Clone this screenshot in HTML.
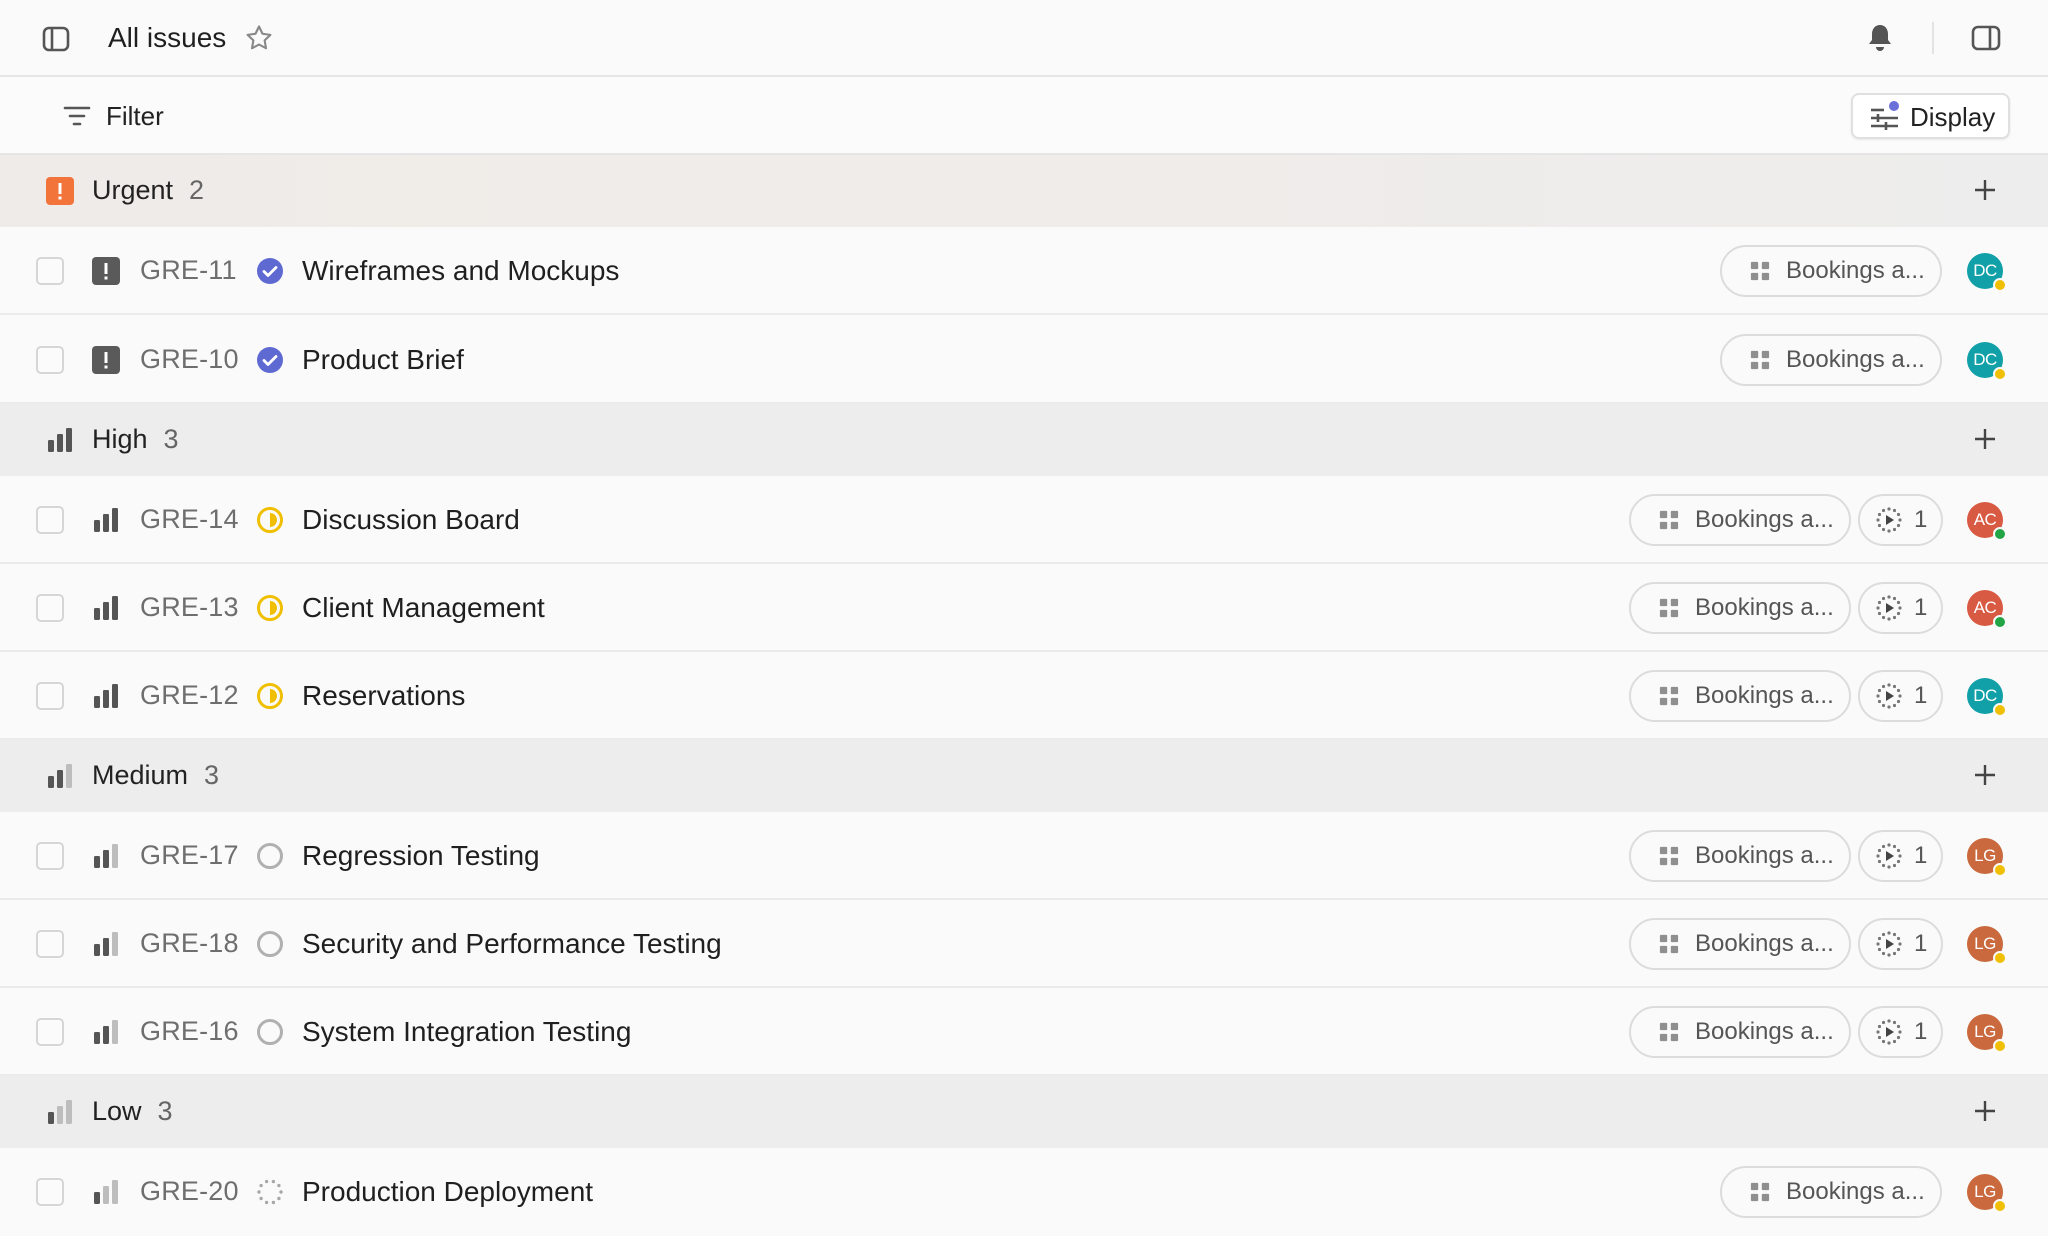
<!DOCTYPE html>
<html><head><meta charset="utf-8"><style>
*{box-sizing:border-box;margin:0;padding:0}
body{width:2048px;height:1236px;overflow:hidden;background:#fafafa;font-family:"Liberation Sans",sans-serif;color:#1f1f1f;position:relative}
.abs{position:absolute}
.top{left:0;top:0;width:2048px;height:77px;border-bottom:2px solid #e6e6e6;background:#fafafa}
.fbar{left:0;top:77px;width:2048px;height:78px;border-bottom:2px solid #e6e6e6;background:#fbfbfb}
.hdr{position:absolute;left:0;width:2048px;height:72px;background:#ededed}
.hdr .lbl{position:absolute;left:92px;top:20px;font-size:27px;color:#222}
.hdr .cnt{color:#666;margin-left:16px}
.hdr .ic{position:absolute;left:46px;top:22px}
.hdr .plus{position:absolute;left:1972px;top:22px}
.row{position:absolute;left:0;width:2048px;height:88px;background:#fafafa;border-bottom:2px solid #ebebeb}
.cb{position:absolute;left:36px;top:30px;width:28px;height:28px;border:2px solid #d6d6d6;border-radius:5px;background:#fbfbfb}
.pi{position:absolute;left:92px;top:30px}
.id{position:absolute;left:140px;top:28px;font-size:27px;color:#6e6e6e;letter-spacing:0.2px}
.st{position:absolute;left:256px;top:30px}
.ti{position:absolute;left:302px;top:28px;font-size:28px;color:#1f1f1f}
.chip{position:absolute;top:18px;height:52px;border:2px solid #dcdcdc;border-radius:26px;background:#fafafa;font-size:24px;color:#555;display:flex;align-items:center}
.bk{width:222px;padding-left:28px}
.bk svg{margin-right:16px}
.cy{left:1858px;width:85px;padding-left:14px}
.cy span{margin-left:10px}
.av{position:absolute;left:1967px;top:26px;width:36px;height:36px;border-radius:50%;color:#fff;font-size:17px;text-align:center;line-height:36px;letter-spacing:-0.5px}
.av i{position:absolute;right:-4px;bottom:-3px;width:14px;height:14px;border-radius:50%;border:2px solid #fafafa}
</style></head><body>
<div class="abs top">
 <svg class="abs" style="left:42px;top:26px" width="28" height="26" viewBox="0 0 28 26"><rect x="2" y="2" width="24" height="22" rx="5" fill="none" stroke="#555" stroke-width="2.6"/><line x1="10" y1="3" x2="10" y2="23" stroke="#555" stroke-width="2.6"/></svg>
 <div class="abs" style="left:108px;top:22px;font-size:28px;color:#1f1f1f">All issues</div>
 <svg class="abs" style="left:244px;top:23px" width="30" height="30" viewBox="0 0 24 24"><path d="M12 2.8l2.8 5.8 6.3.9-4.6 4.4 1.1 6.3L12 17.2l-5.6 3 1.1-6.3-4.6-4.4 6.3-.9z" fill="none" stroke="#888" stroke-width="1.7" stroke-linejoin="round"/></svg>
 <svg class="abs" style="left:1866px;top:23px" width="28" height="30" viewBox="0 0 28 30"><path d="M14 2c-5 0-8 4-8 9v6l-3 4h22l-3-4v-6c0-5-3-9-8-9z" fill="#555"/><path d="M10 24a4 4 0 0 0 8 0z" fill="#555"/></svg>
 <div class="abs" style="left:1932px;top:22px;width:2px;height:32px;background:#e3e3e3"></div>
 <svg class="abs" style="left:1971px;top:25px" width="30" height="26" viewBox="0 0 30 26"><rect x="2" y="2" width="26" height="22" rx="5" fill="none" stroke="#555" stroke-width="2.6"/><line x1="19" y1="3" x2="19" y2="23" stroke="#555" stroke-width="2.6"/></svg>
</div>
<div class="abs fbar">
 <svg class="abs" style="left:63px;top:28px" width="28" height="22" viewBox="0 0 28 22"><g stroke="#555" stroke-width="2.6" stroke-linecap="round"><line x1="2" y1="3" x2="26" y2="3"/><line x1="7" y1="11" x2="21" y2="11"/><line x1="11" y1="19" x2="17" y2="19"/></g></svg>
 <div class="abs" style="left:106px;top:24px;font-size:26px;color:#222">Filter</div>
 <div class="abs" style="left:1851px;top:16px;width:159px;height:46px;border:2px solid #e0e0e0;border-radius:8px;background:#fff;box-shadow:0 1px 2px rgba(0,0,0,.08)">
  <svg class="abs" style="left:15px;top:6px" width="34" height="30" viewBox="0 0 34 30"><g stroke="#555" stroke-width="2.6"><line x1="3" y1="9" x2="16" y2="9"/><line x1="3" y1="17" x2="30" y2="17"/><line x1="3" y1="25" x2="30" y2="25"/><line x1="10" y1="13" x2="10" y2="21"/><line x1="18" y1="21" x2="18" y2="29"/></g><circle cx="26" cy="5" r="5" fill="#6b6fd8"/></svg>
  <div class="abs" style="left:57px;top:7px;font-size:26px;color:#222">Display</div>
 </div>
</div>

<div class="hdr" style="top:155px;background:linear-gradient(90deg,#efebe8,#f0ece9 40%,#ededed)">
 <svg class="ic" width="28" height="28" viewBox="0 0 28 28"><rect width="28" height="28" rx="4" fill="#f2743a"/><rect x="12.5" y="6" width="3" height="11" fill="#fff"/><rect x="12.5" y="19.5" width="3" height="3" fill="#fff"/></svg>
 <div class="lbl">Urgent<span class="cnt">2</span></div>
 <svg class="plus" width="26" height="26" viewBox="0 0 26 26"><path d="M13 3v20M3 13h20" stroke="#444" stroke-width="2.4"/></svg>
</div>

<div id="rows"></div>
<script>
const grid='<svg width="20" height="20" viewBox="0 0 22 22" fill="#8f8f8f"><rect x="1" y="1" width="8" height="8" rx="1"/><rect x="13" y="1" width="8" height="8" rx="1"/><rect x="1" y="13" width="8" height="8" rx="1"/><rect x="13" y="13" width="8" height="8" rx="1"/></svg>';
let dots='';for(let i=0;i<12;i++){const a=i*Math.PI/6;dots+=`<circle cx="${15+11*Math.cos(a)}" cy="${15+11*Math.sin(a)}" r="1.6"/>`}
const cyc='<svg width="30" height="30" viewBox="0 0 30 30" fill="#777">'+dots+'<path d="M12 10l8 5-8 5z" fill="#444"/></svg>';
const pri={
u:'<svg width="28" height="28" viewBox="0 0 28 28"><rect width="28" height="28" rx="4" fill="#5a5a5a"/><rect x="12.5" y="6" width="3" height="11" fill="#fff"/><rect x="12.5" y="19.5" width="3" height="3" fill="#fff"/></svg>',
h:'<svg width="28" height="28" viewBox="0 0 28 28"><rect x="2" y="14" width="6" height="12" rx="1.2" fill="#555"/><rect x="11" y="8" width="6" height="18" rx="1.2" fill="#555"/><rect x="20" y="2" width="6" height="24" rx="1.2" fill="#555"/></svg>',
m:'<svg width="28" height="28" viewBox="0 0 28 28"><rect x="2" y="14" width="6" height="12" rx="1.2" fill="#555"/><rect x="11" y="8" width="6" height="18" rx="1.2" fill="#555"/><rect x="20" y="2" width="6" height="24" rx="1.2" fill="#bdbdbd"/></svg>',
l:'<svg width="28" height="28" viewBox="0 0 28 28"><rect x="2" y="14" width="6" height="12" rx="1.2" fill="#555"/><rect x="11" y="8" width="6" height="18" rx="1.2" fill="#bdbdbd"/><rect x="20" y="2" width="6" height="24" rx="1.2" fill="#bdbdbd"/></svg>'};
let sd='';for(let i=0;i<10;i++){const a=i*Math.PI/5;sd+=`<circle cx="${14+11*Math.cos(a)}" cy="${14+11*Math.sin(a)}" r="1.7"/>`}
const st={
d:'<svg width="28" height="28" viewBox="0 0 28 28"><circle cx="14" cy="14" r="13" fill="#5e6ad2"/><path d="M8 14.5l4 4 8-8" fill="none" stroke="#fff" stroke-width="2.8" stroke-linecap="round" stroke-linejoin="round"/></svg>',
p:'<svg width="28" height="28" viewBox="0 0 28 28"><circle cx="14" cy="14" r="11.5" fill="none" stroke="#f0bf00" stroke-width="3"/><path d="M14 7a7 7 0 0 1 0 14z" fill="#f0bf00"/></svg>',
t:'<svg width="28" height="28" viewBox="0 0 28 28"><circle cx="14" cy="14" r="11.5" fill="none" stroke="#b0b0b0" stroke-width="3"/></svg>',
b:'<svg width="28" height="28" viewBox="0 0 28 28" fill="#a8a8a8">'+sd+'</svg>'};
const av={DC:['#11a0a8','#f0bf00'],AC:['#d95a43','#22a447'],LG:['#c9693d','#f0bf00']};
const plus='<svg class="plus" width="26" height="26" viewBox="0 0 26 26"><path d="M13 3v20M3 13h20" stroke="#444" stroke-width="2.4"/></svg>';
const items=[
['row',227,'u','GRE-11','d','Wireframes and Mockups','DC',0],
['row',316,'u','GRE-10','d','Product Brief','DC',0],
['hdr',404,'h','High',3],
['row',476,'h','GRE-14','p','Discussion Board','AC',1],
['row',564,'h','GRE-13','p','Client Management','AC',1],
['row',652,'h','GRE-12','p','Reservations','DC',1],
['hdr',740,'m','Medium',3],
['row',812,'m','GRE-17','t','Regression Testing','LG',1],
['row',900,'m','GRE-18','t','Security and Performance Testing','LG',1],
['row',988,'m','GRE-16','t','System Integration Testing','LG',1],
['hdr',1076,'l','Low',3],
['row',1148,'l','GRE-20','b','Production Deployment','LG',0]];
let h='';
for(const it of items){
 if(it[0]=='hdr'){h+=`<div class="hdr" style="top:${it[1]}px"><div class="ic">${pri[it[2]]}</div><div class="lbl">${it[3]}<span class="cnt">${it[4]}</span></div>${plus}</div>`;continue}
 const [_,y,p,id,s,t,a,c]=it;
 h+=`<div class="row" style="top:${y}px;${y==1148?'border-bottom:none':''}"><div class="cb"></div><div class="pi">${pri[p]}</div><div class="id">${id}</div><div class="st">${st[s]}</div><div class="ti">${t}</div>`;
 h+=`<div class="chip bk" style="left:${c?1629:1720}px">${grid}Bookings a...</div>`;
 if(c)h+=`<div class="chip cy">${cyc}<span>1</span></div>`;
 h+=`<div class="av" style="background:${av[a][0]}">${a}<i style="background:${av[a][1]}"></i></div></div>`;
}
document.getElementById('rows').innerHTML=h;
</script>
</body></html>
